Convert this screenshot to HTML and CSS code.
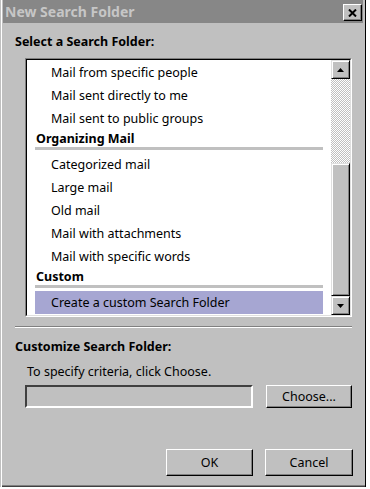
FILE: index.html
```html
<!DOCTYPE html>
<html lang="en">
<head>
    <title>New Search Folder</title>
    <link rel="stylesheet" href="styles.css">
</head>
<body>
<div class="screen">
    <div class="dialog">
        <div class="titlebar">
            <span class="title">New Search Folder</span>
            <span class="close-btn">
                <svg width="9" height="8" viewBox="0 0 9 8"><path d="M1 0.5 L8 7.5 M8 0.5 L1 7.5" stroke="#000" stroke-width="2"/></svg>
            </span>
        </div>
        <div class="content">
            <h2 class="group-label">Select a Search Folder:</h2>
            <div class="listbox">
                <div class="listbox-inner">
                    <ul class="items">
                        <li class="item">Mail from specific people</li>
                        <li class="item">Mail sent directly to me</li>
                        <li class="item">Mail sent to public groups</li>
                        <li class="group">Organizing Mail</li>
                        <li class="item">Categorized mail</li>
                        <li class="item">Large mail</li>
                        <li class="item">Old mail</li>
                        <li class="item">Mail with attachments</li>
                        <li class="item">Mail with specific words</li>
                        <li class="group">Custom</li>
                        <li class="item selected">Create a custom Search Folder</li>
                    </ul>
                    <div class="scrollbar">
                        <div class="sb-btn">
                            <svg width="7" height="4" viewBox="0 0 7 4"><polygon points="3.5,0 7,4 0,4" fill="#000"/></svg>
                        </div>
                        <div class="sb-track"></div>
                        <div class="sb-thumb"></div>
                        <div class="sb-btn">
                            <svg width="7" height="4" viewBox="0 0 7 4"><polygon points="0,0 7,0 3.5,4" fill="#000"/></svg>
                        </div>
                    </div>
                </div>
            </div>
            <div class="separator"></div>
            <h2 class="group-label second">Customize Search Folder:</h2>
            <p class="hint">To specify criteria, click Choose.</p>
            <div class="criteria-row">
                <div class="textbox"></div>
                <div class="btn choose">Choose...</div>
            </div>
            <div class="actions">
                <div class="btn ok">OK</div>
                <div class="btn cancel">Cancel</div>
            </div>
        </div>
    </div>
    <div class="backdrop"></div>
</div>
</body>
</html>
```
FILE: styles.css
```css
body {
    margin: 0;
    background-color: white;
    font-family: "Noto Sans", "Open Sans", sans-serif;
    font-size: 12.5px;
    color: #000;
}

.screen {
    display: flex;
    height: 489px;
}

.dialog {
    width: 365px;
    height: 487px;
    background-color: #c0c0c0;
    border-right: 1px solid #000;
    box-shadow: inset 1px 0 0 #c0c0c0, inset 2px 0 0 #fff, inset 0 -1px 0 #404040, inset 0 -2px 0 #808080;
    display: flex;
    flex-direction: column;
}

.backdrop {
    flex: 1;
    background-color: #fff;
}

.titlebar {
    height: 23px;
    margin: 0 2px 0 3px;
    background-color: #878787;
    display: flex;
    justify-content: space-between;
    align-items: flex-start;
}

.title {
    padding-left: 2px;
    line-height: 23px;
    font-weight: bold;
    font-size: 14px;
    color: #c6c6c6;
}

.close-btn {
    width: 17px;
    height: 15px;
    margin-top: 4px;
    margin-right: 1px;
    background-color: #c0c0c0;
    border: 1px solid;
    border-color: #fff #000 #000 #fff;
    box-shadow: inset -1px -1px 0 #808080;
    display: flex;
    justify-content: center;
    align-items: center;
}

.content {
    padding: 0 12px 0 15px;
}

.group-label {
    margin: 11px 0 0 0;
    font-size: 12.5px;
    line-height: 16px;
    font-weight: bold;
}

.listbox {
    margin: 8px 0 0 10px;
    width: 325px;
    height: 257px;
    border: 1px solid;
    border-color: #808080 #fff #fff #808080;
}

.listbox-inner {
    height: 255px;
    border: 1px solid;
    border-color: #000 #dfdfdf #dfdfdf #000;
    background-color: #fff;
    display: flex;
}

.items {
    list-style: none;
    margin: 0;
    padding: 1px 0 0 8px;
    width: 288px;
}

.item {
    height: 23px;
    line-height: 23px;
    padding-left: 16px;
}

.item.selected {
    background-color: #a6a6d2;
}

.group {
    line-height: 17px;
    padding-left: 1px;
    font-weight: bold;
    border-bottom: 3px solid #c0c0c0;
    margin-bottom: 3px;
}

.scrollbar {
    margin-left: 8px;
    width: 19px;
    display: flex;
    flex-direction: column;
}

.sb-btn {
    height: 17px;
    background-color: #c0c0c0;
    border: 1px solid;
    border-color: #dfdfdf #000 #000 #dfdfdf;
    box-shadow: inset 1px 1px 0 #fff, inset -1px -1px 0 #808080;
    display: flex;
    justify-content: center;
    align-items: center;
}

.sb-track {
    height: 84px;
    background: repeating-conic-gradient(#c0c0c0 0 25%, #fff 0 50%) 0 0 / 2px 2px;
}

.sb-thumb {
    flex: 1;
    background-color: #c0c0c0;
    border: 1px solid;
    border-color: #dfdfdf #000 #000 #dfdfdf;
    box-shadow: inset 1px 1px 0 #fff, inset -1px -1px 0 #808080;
}

.separator {
    margin-top: 9px;
    width: 337px;
    border-top: 1px solid #808080;
    border-bottom: 1px solid #fff;
}

.group-label.second {
    margin-top: 11px;
}

.hint {
    margin: 9px 0 0 0;
    padding-left: 12px;
    line-height: 16px;
}

.criteria-row {
    margin: 5px 0 0 10px;
    display: flex;
    gap: 13px;
}

.textbox {
    width: 224px;
    height: 19px;
    border: 2px solid;
    border-color: #404040 #fff #fff #404040;
    background-color: #c0c0c0;
}

.btn {
    background-color: #c0c0c0;
    border: 1px solid;
    border-color: #fff #000 #000 #fff;
    box-shadow: inset -1px -1px 0 #808080;
    display: flex;
    justify-content: center;
    align-items: center;
}

.choose {
    width: 84px;
    height: 21px;
}

.actions {
    margin-top: 41px;
    display: flex;
    justify-content: flex-end;
    gap: 12px;
}

.ok {
    width: 85px;
    height: 25px;
}

.cancel {
    width: 86px;
    height: 25px;
}
```
